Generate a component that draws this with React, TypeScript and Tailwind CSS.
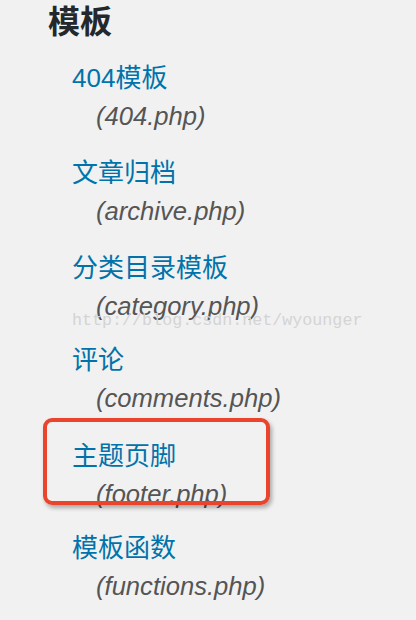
const templates = [
  { title: "404模板", file: "(404.php)", gap: "mb-[19px]" },
  { title: "文章归档", file: "(archive.php)", gap: "mb-[19px]" },
  { title: "分类目录模板", file: "(category.php)", gap: "mb-[16px]" },
  { title: "评论", file: "(comments.php)", gap: "mb-[20px]" },
  { title: "主题页脚", file: "(footer.php)", gap: "mb-[16px]" },
  { title: "模板函数", file: "(functions.php)", gap: "mb-0" },
];

export default function App() {
  return (
    <main className="relative h-[620px] w-[416px] overflow-hidden bg-[#f1f1f1] font-['Liberation_Sans','Noto_Sans_CJK_SC',sans-serif]">
      <div className="pl-[48px]">
        <h2 className="text-[32px] leading-[44px] font-bold text-[#23282d]">模板</h2>

        {/* template list */}
        <ul className="mt-[15px] pl-[24px]">
          {templates.map((t) => (
            <li key={t.file} className={t.gap}>
              <a className="block text-[26px] leading-[38px] text-[#0073aa]">{t.title}</a>
              <span className="block pl-[24px] text-[25.6px] leading-[38px] italic text-[#555]">
                {t.file}
              </span>
            </li>
          ))}
        </ul>
      </div>

      {/* blog watermark */}
      <div className="absolute left-[72px] top-[311px] font-['Liberation_Mono',monospace] text-[16.7px] leading-[20px] text-[#d4d4d4]">
        http://blog.csdn.net/wyounger
      </div>

      {/* red highlight box */}
      <div className="absolute left-[43px] top-[418px] h-[87px] w-[227px] rounded-[9px] border-4 border-[#ea452c] shadow-[2px_3px_4px_rgba(0,0,0,0.3)]" />
    </main>
  );
}
